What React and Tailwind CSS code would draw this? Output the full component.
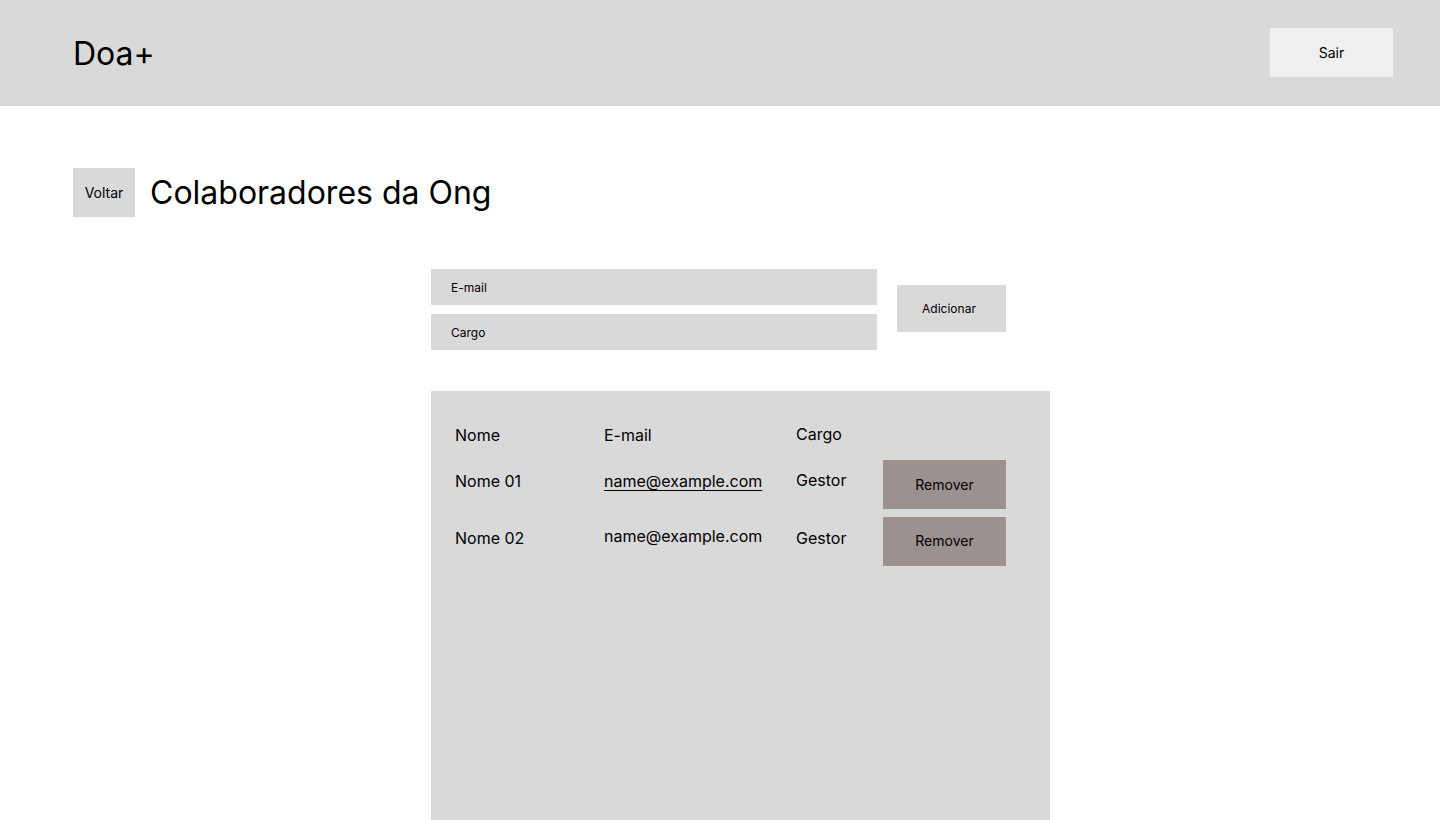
export default function App() {
  return (
    <div className="min-h-[820px] bg-white text-black" style={{ fontFamily: "Inter, 'Noto Sans', sans-serif" }}>
      <header className="h-[106px] bg-[#d9d9d9] flex items-center justify-between pl-[73px] pr-[47px]">
        <div className="text-[32px] leading-none mt-[1px]">Doa+</div>
        <button className="w-[123px] h-[49px] bg-[#f0f0f0] text-[14px] flex items-center justify-center mt-[-2px]">Sair</button>
      </header>

      <div className="flex items-center gap-[15px] pl-[73px] mt-[62px]">
        <button className="w-[62px] h-[49px] bg-[#d9d9d9] text-[14px] flex items-center justify-center">Voltar</button>
        <h1 className="text-[32px] leading-none">Colaboradores da Ong</h1>
      </div>

      <div className="pl-[431px] mt-[52px]">
        <div className="flex items-center gap-[20px]">
          <div className="flex flex-col gap-[9px]">
            <div className="w-[446px] h-[36px] bg-[#d9d9d9] flex items-center pl-[20px] pt-[2px] text-[12px]">E-mail</div>
            <div className="w-[446px] h-[36px] bg-[#d9d9d9] flex items-center pl-[20px] pt-[2px] text-[12px]">Cargo</div>
          </div>
          <button className="w-[109px] h-[47px] bg-[#d9d9d9] text-[12px] flex items-center justify-center mt-[-2px] pr-[5px]">Adicionar</button>
        </div>

        <div className="w-[619px] h-[429px] bg-[#d9d9d9] mt-[41px] pt-[34px] pl-[24px] text-[16px] leading-[20px]">
          <div className="grid grid-cols-[149px_192px_87px_123px] h-[35px]">
            <div>Nome</div>
            <div>E-mail</div>
            <div className="mt-[-1px]">Cargo</div>
            <div></div>
          </div>
          <div className="flex flex-col gap-[8px]">
            <div className="grid grid-cols-[149px_192px_87px_123px] h-[49px]">
              <div className="mt-[11px]">Nome 01</div>
              <div className="mt-[11px]"><span className="underline underline-offset-[3px]">name@example.com</span></div>
              <div className="mt-[10px]">Gestor</div>
              <button className="h-[49px] bg-[#9b918f] text-[14px] flex items-center justify-center">Remover</button>
            </div>
            <div className="grid grid-cols-[149px_192px_87px_123px] h-[49px]">
              <div className="mt-[11px]">Nome 02</div>
              <div className="mt-[9px]">name@example.com</div>
              <div className="mt-[11px]">Gestor</div>
              <button className="h-[49px] bg-[#9b918f] text-[14px] flex items-center justify-center pb-[2px]">Remover</button>
            </div>
          </div>
        </div>
      </div>
    </div>
  );
}
